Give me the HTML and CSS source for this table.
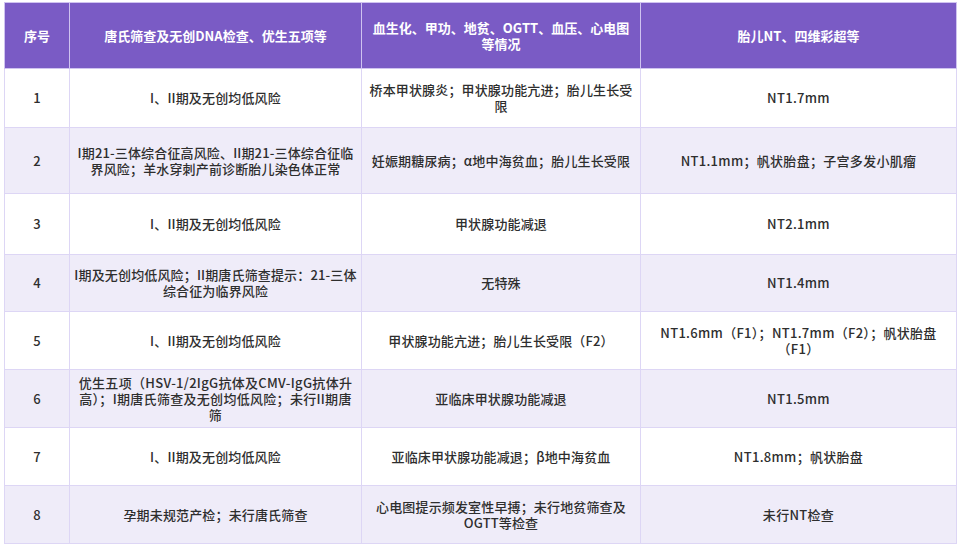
FILE: index.html
```html
<!DOCTYPE html>
<html lang="zh">
<head>
<meta charset="utf-8">
<link rel="stylesheet" href="styles.css">
</head>
<body>
<table class="tbl">
  <colgroup>
    <col class="c1"><col class="c2"><col class="c3"><col class="c4">
  </colgroup>
  <thead>
    <tr class="h-head">
      <th>序号</th>
      <th>唐氏筛查及无创DNA检查、优生五项等</th>
      <th>血生化、甲功、地贫、OGTT、血压、心电图等情况</th>
      <th>胎儿NT、四维彩超等</th>
    </tr>
  </thead>
  <tbody>
    <tr class="h59">
      <td>1</td>
      <td>I、II期及无创均低风险</td>
      <td>桥本甲状腺炎；甲状腺功能亢进；胎儿生长受限</td>
      <td>NT1.7mm</td>
    </tr>
    <tr class="alt h66">
      <td>2</td>
      <td>I期21-三体综合征高风险、II期21-三体综合征临界风险；羊水穿刺产前诊断胎儿染色体正常</td>
      <td>妊娠期糖尿病；α地中海贫血；胎儿生长受限</td>
      <td>NT1.1mm；帆状胎盘；子宫多发小肌瘤</td>
    </tr>
    <tr class="h61">
      <td>3</td>
      <td>I、II期及无创均低风险</td>
      <td>甲状腺功能减退</td>
      <td>NT2.1mm</td>
    </tr>
    <tr class="alt h57">
      <td>4</td>
      <td>I期及无创均低风险；II期唐氏筛查提示：21-三体综合征为临界风险</td>
      <td>无特殊</td>
      <td>NT1.4mm</td>
    </tr>
    <tr class="h58">
      <td>5</td>
      <td>I、II期及无创均低风险</td>
      <td>甲状腺功能亢进；胎儿生长受限（F2）</td>
      <td>NT1.6mm（F1）；NT1.7mm（F2）；帆状胎盘（F1）</td>
    </tr>
    <tr class="alt h58">
      <td>6</td>
      <td class="spaced">优生五项（HSV-1/2IgG抗体及CMV-IgG抗体升高）；I期唐氏筛查及无创均低风险；未行II期唐筛</td>
      <td>亚临床甲状腺功能减退</td>
      <td>NT1.5mm</td>
    </tr>
    <tr class="h58">
      <td>7</td>
      <td>I、II期及无创均低风险</td>
      <td>亚临床甲状腺功能减退；β地中海贫血</td>
      <td>NT1.8mm；帆状胎盘</td>
    </tr>
    <tr class="alt h58">
      <td>8</td>
      <td>孕期未规范产检；未行唐氏筛查</td>
      <td>心电图提示频发室性早搏；未行地贫筛查及OGTT等检查</td>
      <td>未行NT检查</td>
    </tr>
  </tbody>
</table>
</body>
</html>
```

FILE: styles.css
```css
html, body {
  margin: 0;
  padding: 0;
  background: #ffffff;
}
body {
  padding: 2px 4px 0 4px;
  font-family: "Noto Sans CJK SC", "Noto Sans", sans-serif;
}
.tbl {
  width: 952px;
  border-collapse: collapse;
  table-layout: fixed;
  font-size: 13px;
  line-height: 16px;
}
.c1 { width: 65px; }
.c2 { width: 292px; }
.c3 { width: 279px; }
.c4 { width: 316px; }
.tbl th, .tbl td {
  border: 1px solid #ddd6f5;
  text-align: center;
  vertical-align: middle;
}
.tbl th {
  background: #7a5bc5;
  color: #ffffff;
  font-weight: 700;
  border-color: #cfc3f0;
  padding: 0 6px;
}
.tbl td {
  color: #2e2e2e;
  font-weight: 500;
  letter-spacing: 0.15px;
  padding: 0 1px;
}
.tbl td:nth-child(4) {
  padding: 0 4px;
  letter-spacing: 0.3px;
}
.tbl td.spaced {
  padding: 0 3px;
  letter-spacing: 0.3px;
}
.tbl tr.alt td {
  background: #efecf9;
}
.h-head { height: 66px; }
.h59 { height: 59px; }
.h66 { height: 66px; }
.h61 { height: 61px; }
.h57 { height: 57px; }
.h58 { height: 58px; }
```
